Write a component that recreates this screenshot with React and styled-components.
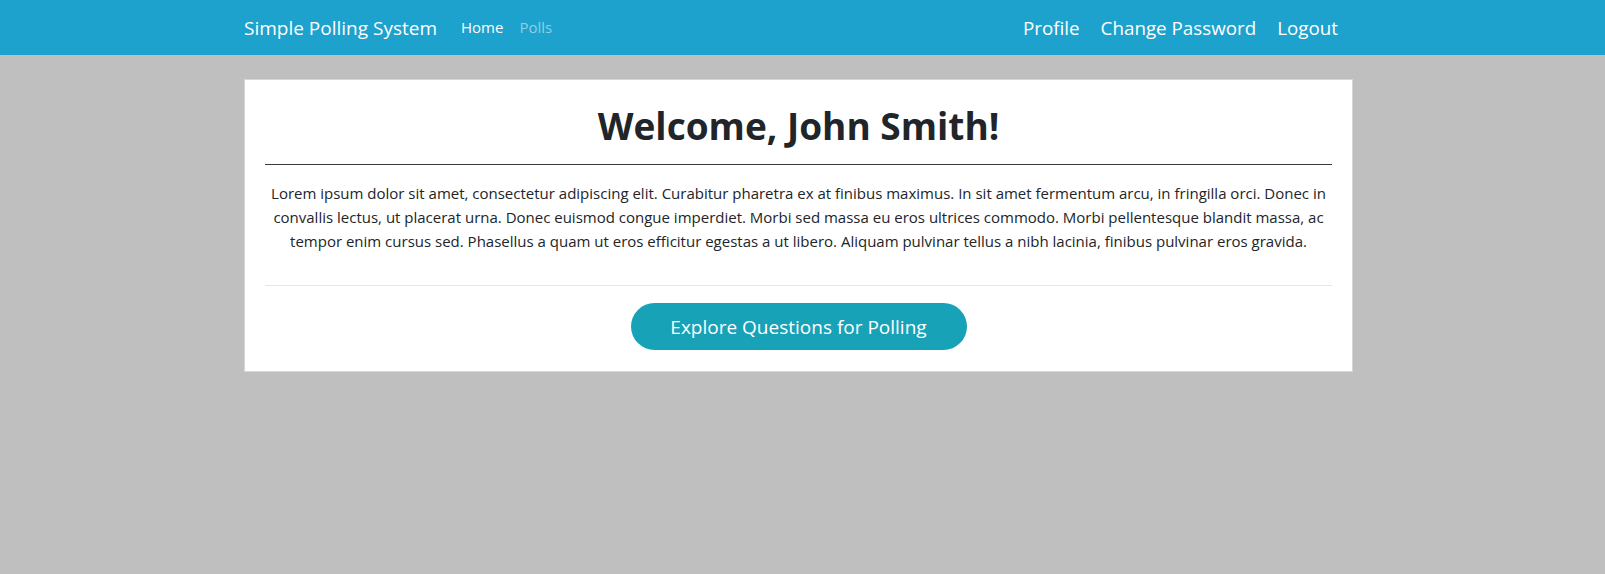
import styled, { createGlobalStyle } from "styled-components";

const GlobalStyle = createGlobalStyle`
  html, body {
    margin: 0;
    padding: 0;
    background: #bfbfbf;
    font-family: "Open Sans", "Noto Sans", sans-serif;
    color: #212529;
  }
`;

const Navbar = styled.nav`
  height: 55px;
  background: #1da1cd;
  padding-right: 8px;
  display: flex;
  justify-content: center;
`;

const NavInner = styled.div`
  width: 1109px;
  display: flex;
  align-items: center;
`;

const Brand = styled.a`
  font-size: 19px;
  color: #fff;
  margin-right: 24px;
  text-decoration: none;
`;

const NavLink = styled.a`
  font-size: ${(props) => (props.big ? "18.8px" : "15px")};
  color: ${(props) => (props.muted ? "rgba(255, 255, 255, 0.5)" : "#fff")};
  margin-right: ${(props) => (props.big ? "21px" : "16px")};
  margin-top: ${(props) => (props.big ? "0" : "-2px")};
  text-decoration: none;
  &:last-child {
    margin-right: 15px;
  }
`;

const Spacer = styled.div`
  flex: 1;
`;

const Main = styled.main`
  display: flex;
  justify-content: center;
  padding: 24px 8px 0 0;
`;

const Card = styled.section`
  width: 1109px;
  box-sizing: border-box;
  background: #fff;
  border: 1px solid #d6d6d6;
  padding: 20px 20px 21px;
  text-align: center;
`;

const Title = styled.h1`
  margin: 2px 0 14px;
  font-size: 37px;
  line-height: 48px;
  font-weight: 700;
`;

const Rule = styled.hr`
  margin: 0;
  border: 0;
  border-top: 1px solid ${(props) => (props.light ? "#e6e6e6" : "#3a3a3a")};
`;

const Text = styled.p`
  margin: 16px 0 32px;
  font-size: 15px;
  line-height: 24px;
`;

const Button = styled.button`
  margin-top: 17px;
  width: 336px;
  height: 47px;
  border: 0;
  border-radius: 24px;
  background: #17a2b8;
  color: #fff;
  font-family: inherit;
  font-size: 19px;
  cursor: pointer;
`;

export default function App() {
  return (
    <>
      <GlobalStyle />
      <Navbar>
        <NavInner>
          <Brand href="#">Simple Polling System</Brand>
          <NavLink href="#">Home</NavLink>
          <NavLink href="#" muted>
            Polls
          </NavLink>
          <Spacer />
          <NavLink href="#" big>
            Profile
          </NavLink>
          <NavLink href="#" big>
            Change Password
          </NavLink>
          <NavLink href="#" big>
            Logout
          </NavLink>
        </NavInner>
      </Navbar>
      <Main>
        <Card>
          <Title>Welcome, John Smith!</Title>
          <Rule />
          <Text>
            Lorem ipsum dolor sit amet, consectetur adipiscing elit. Curabitur
            pharetra ex at finibus maximus. In sit amet fermentum arcu, in
            fringilla orci. Donec in convallis lectus, ut placerat urna. Donec
            euismod congue imperdiet. Morbi sed massa eu eros ultrices commodo.
            Morbi pellentesque blandit massa, ac tempor enim cursus sed.
            Phasellus a quam ut eros efficitur egestas a ut libero. Aliquam
            pulvinar tellus a nibh lacinia, finibus pulvinar eros gravida.
          </Text>
          <Rule light />
          <Button>Explore Questions for Polling</Button>
        </Card>
      </Main>
    </>
  );
}
